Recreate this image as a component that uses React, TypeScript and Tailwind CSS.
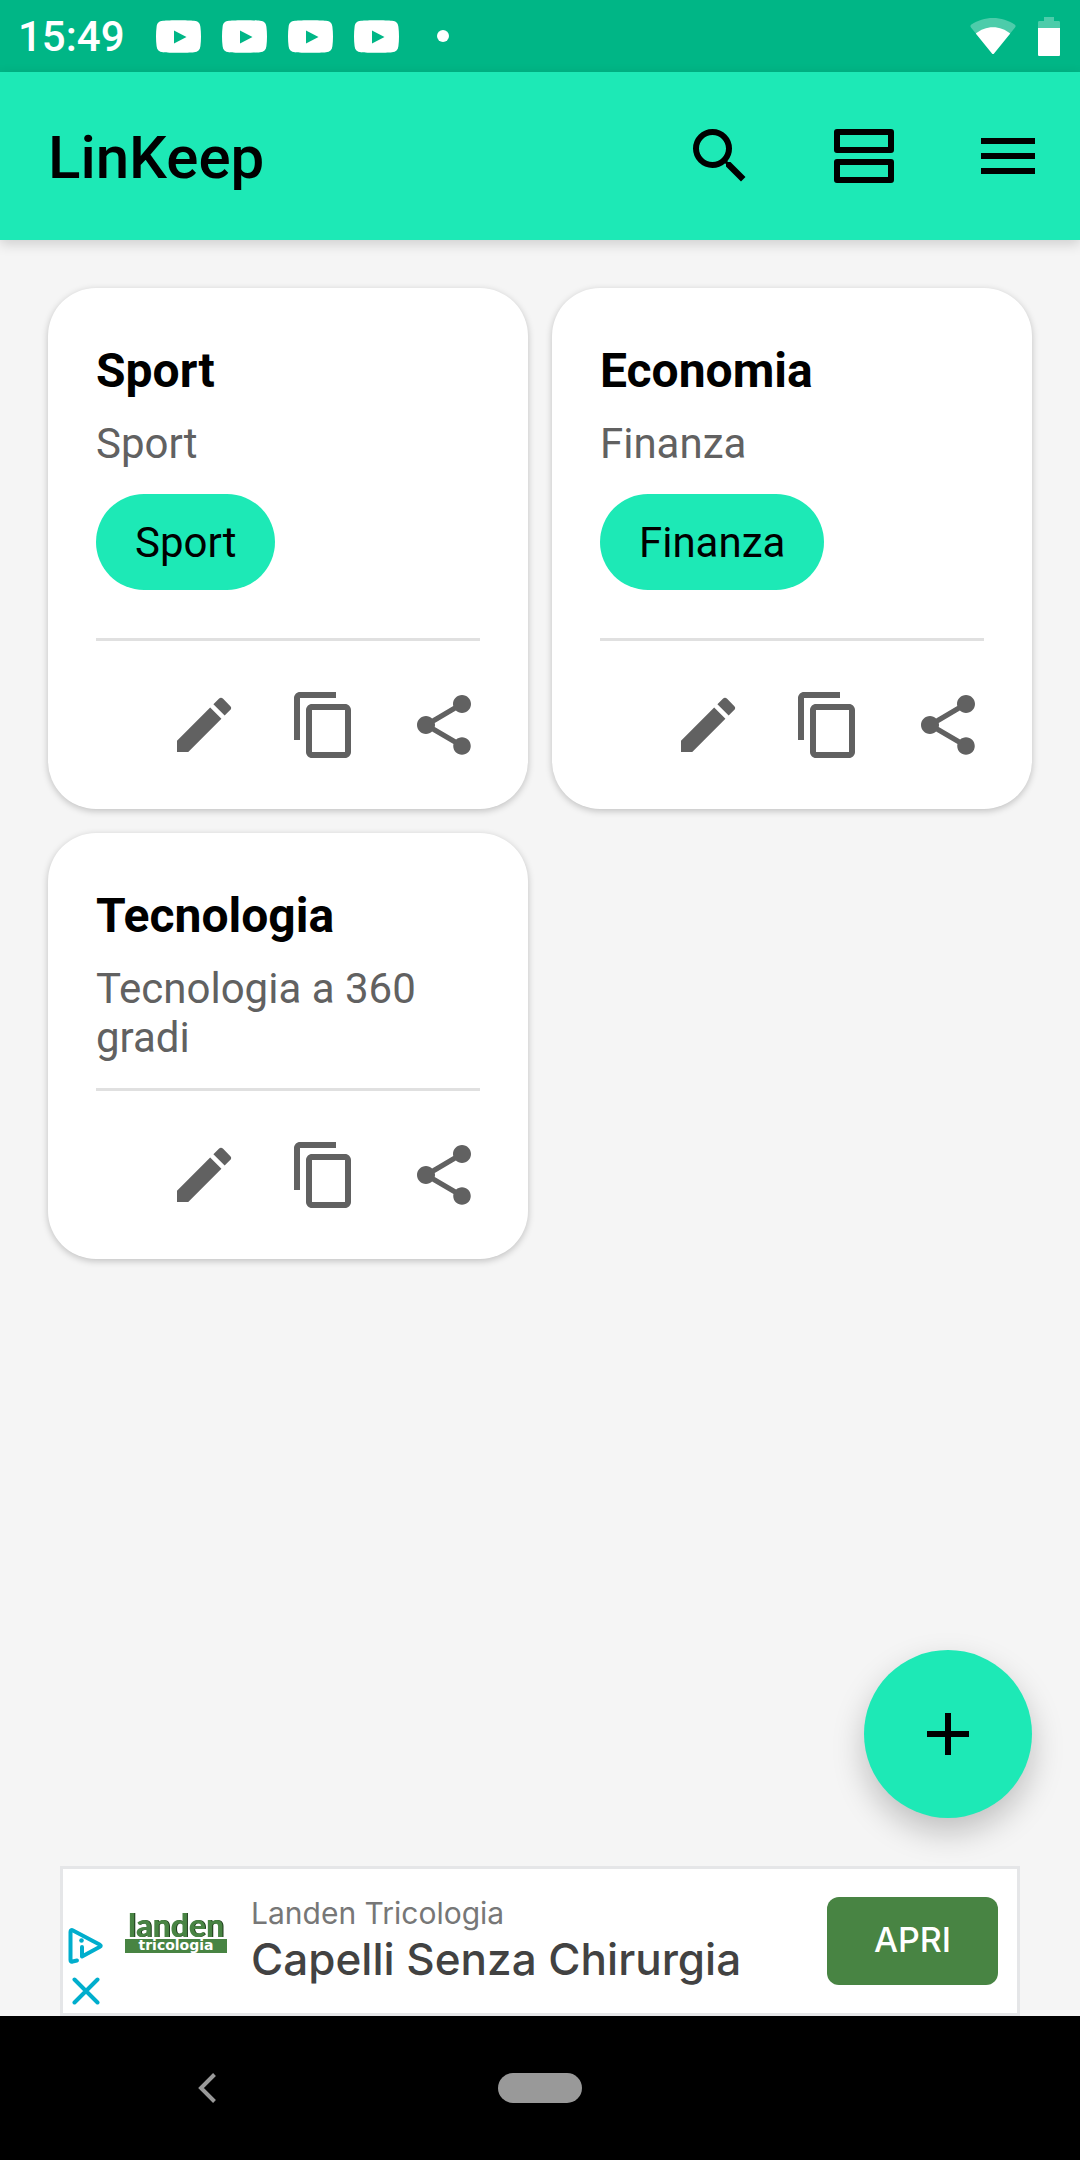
import type { ReactNode } from "react";
import { MdAdd, MdContentCopy, MdEdit, MdMenu, MdSearch, MdShare } from "react-icons/md";

type LinkGroup = {
  title: string;
  description: string;
  tag?: string;
};

const groups: LinkGroup[] = [
  { title: "Sport", description: "Sport", tag: "Sport" },
  { title: "Economia", description: "Finanza", tag: "Finanza" },
  { title: "Tecnologia", description: "Tecnologia a 360 gradi" },
];

const notifications = [1, 2, 3, 4];

function YoutubeIcon() {
  return (
    <svg width="45" height="33" viewBox="0 0 45 33" aria-hidden="true">
      <path
        fill="#fff"
        fillRule="evenodd"
        d="M7 .8C13 0 32 0 38 .8c4 .4 6 2.200 6.400 6 .8 6 .8 13.400 0 19.400-.4 3.600-2.400 5.600-6.400 6-6 .8-25 .8-31 0-4-.4-6-2.400-6.400-6-.8-6-.8-13.400 0-19.400C1 3 3 1.200 7 .8ZM18 10.500v13L30.500 17 18 10.500Z"
      />
    </svg>
  );
}

function WifiIcon() {
  return (
    <svg width="46" height="37" viewBox="0 0 46 37" aria-hidden="true">
      <path fill="#fff" fillOpacity="0.3" d="M1 9.500c-.9-1.200-.8-2.200.4-3C7.500 2.500 15 0 23 0s15.500 2.500 21.600 6.500c1.200.8 1.300 1.800.4 3L24 35.500c-.6.7-1.400.7-2 0L1 9.500Z" />
      <path fill="#fff" d="M5.800 15.500C10.500 11.500 16.500 9.200 23 9.200s12.500 2.300 17.200 6.300L24 35.500c-.6.7-1.400.7-2 0L5.800 15.500Z" />
    </svg>
  );
}

function BatteryIcon() {
  return (
    <svg width="22" height="39" viewBox="0 0 22 39" aria-hidden="true">
      <path fill="#fff" fillOpacity="0.3" d="M6 0h10v4h4.500c1 0 1.500.5 1.500 1.500V11H0V5.500C0 4.500.5 4 1.500 4H6V0Z" />
      <path fill="#fff" d="M0 11h22v26.500c0 1-.5 1.500-1.500 1.500h-19C.5 39 0 38.500 0 37.500V11Z" />
    </svg>
  );
}

function AgendaIcon() {
  return (
    <svg width="72" height="72" viewBox="0 0 24 24" fill="none" stroke="currentColor" strokeWidth="2" strokeLinejoin="round" aria-hidden="true">
      <path d="M3 4h18v6H3zM3 14h18v6H3z" />
    </svg>
  );
}

function LandenLogo() {
  return (
    <svg width="102" height="56" viewBox="0 0 102 56" role="img" aria-label="Landen Tricologia" className="shrink-0 overflow-visible">
      <text
        x="51"
        y="24"
        textAnchor="middle"
        fill="#488443"
        fontFamily="Lato, 'Liberation Sans', sans-serif"
        fontWeight="900"
        fontSize="32"
        className="drop-shadow-[1px_0_0_#1d3a1b]"
      >
        landen
      </text>
      <rect x="0" y="26" width="102" height="14" fill="#488443" />
      <text x="51" y="37" textAnchor="middle" fill="#fff" fontFamily="'DejaVu Sans', sans-serif" fontWeight="700" fontSize="14">
        tricologia
      </text>
    </svg>
  );
}

function AdChoicesIcon() {
  return (
    <svg width="36" height="38" viewBox="0 0 36 38" fill="none" stroke="#00aecd" strokeWidth="4" strokeLinecap="round" strokeLinejoin="round" aria-hidden="true">
      <path d="M9 33.500 4.500 34.500C3 35 2.500 34.500 2.500 33V5c0-1.800 1-2.300 2.500-1.500l26.500 14c1.700.9 1.700 1.700 0 2.600L14 29.500V20" />
      <circle cx="13.500" cy="13.500" r="2.300" fill="#00aecd" stroke="none" />
    </svg>
  );
}

function ToolbarButton({ label, children }: { label: string; children: ReactNode }) {
  return (
    <button aria-label={label} className="flex h-full w-36 items-center justify-center">
      {children}
    </button>
  );
}

function GroupCard({ group }: { group: LinkGroup }) {
  return (
    <article className="rounded-[48px] bg-white p-12 shadow-[0_2px_7px_rgba(0,0,0,0.22)]">
      <h2 className="mb-[13px] text-5xl leading-[70px] font-bold text-black">{group.title}</h2>
      <p className="mb-[26px] text-[42px] leading-[49px] text-[#616161]">{group.description}</p>
      {group.tag && (
        <button className="mb-12 flex h-24 items-center rounded-full bg-[#1de9b6] px-[39px] text-[42px] leading-[49px] text-black">
          {group.tag}
        </button>
      )}
      <hr className="border-t-[3px] border-[#e0e0e0]" />
      <div className="mt-12 flex justify-end gap-12 text-[#616161]">
        <button aria-label="Modifica">
          <MdEdit size={72} />
        </button>
        <button aria-label="Copia">
          <MdContentCopy size={72} />
        </button>
        <button aria-label="Condividi">
          <MdShare size={72} />
        </button>
      </div>
    </article>
  );
}

export default function App() {
  return (
    <div className="flex min-h-screen flex-col bg-[#f5f5f5] font-[Roboto,'Liberation_Sans',sans-serif]">
      <div className="flex h-[72px] items-center justify-between bg-[#00b686] pr-5 pl-[18px]">
        <div className="flex items-center">
          <span className="mr-[31px] text-[42px] leading-[49px] font-medium text-white">15:49</span>
          <div className="flex gap-[21px]">
            {notifications.map((id) => (
              <YoutubeIcon key={id} />
            ))}
          </div>
          <span className="ml-[38px] size-3 rounded-full bg-white" />
        </div>
        <div className="flex items-center gap-[22px]">
          <WifiIcon />
          <BatteryIcon />
        </div>
      </div>

      <header className="flex h-[168px] items-center justify-between bg-[#1de9b6] pl-12 text-black shadow-[0_4px_12px_rgba(0,0,0,0.16)]">
        <h1 className="pt-1 text-6xl leading-[70px] font-medium">LinKeep</h1>
        <nav className="flex h-full">
          <ToolbarButton label="Cerca">
            <MdSearch size={72} />
          </ToolbarButton>
          <ToolbarButton label="Cambia vista">
            <AgendaIcon />
          </ToolbarButton>
          <ToolbarButton label="Menu">
            <MdMenu size={72} />
          </ToolbarButton>
        </nav>
      </header>

      <main className="relative flex-1 p-12">
        <div className="grid grid-cols-2 items-start gap-6">
          {groups.map((group) => (
            <GroupCard key={group.title} group={group} />
          ))}
        </div>
        <button
          aria-label="Aggiungi"
          className="absolute right-12 bottom-12 flex size-[168px] items-center justify-center rounded-full bg-[#1de9b6] text-black shadow-[0_14px_32px_rgba(0,0,0,0.22)]"
        >
          <MdAdd size={72} />
        </button>
      </main>

      <aside className="mx-[60px] flex h-[150px] items-center border-[3px] border-[#e5e6e8] bg-white pr-[19px] pl-[5px] font-[Inter,'Liberation_Sans',sans-serif]">
        <div className="flex flex-col items-center gap-3 self-end pb-2">
          <button aria-label="Scegli annunci">
            <AdChoicesIcon />
          </button>
          <button aria-label="Chiudi annuncio">
            <svg width="28" height="28" viewBox="0 0 28 28" stroke="#00aecd" strokeWidth="4" strokeLinecap="round" aria-hidden="true">
              <path d="M2.500 2.500l23 23M25.500 2.500l-23 23" />
            </svg>
          </button>
        </div>
        <div className="ml-[21px]">
          <LandenLogo />
        </div>
        <div className="ml-6 flex-1 pb-1">
          <p className="text-[30px] leading-10 text-[#777777]">Landen Tricologia</p>
          <p className="text-[44px] leading-[52px] font-medium text-[#424242]">Capelli Senza Chirurgia</p>
        </div>
        <button className="h-[88px] w-[171px] rounded-xl bg-[#488443] pb-1 text-[34px] font-medium text-white">APRI</button>
      </aside>

      <nav className="grid h-36 grid-cols-[1fr_auto_1fr] items-center bg-black px-[171px]">
        <button aria-label="Indietro" className="flex size-[72px] items-center justify-center">
          <svg width="18" height="30" viewBox="0 0 18 30" fill="none" stroke="#999" strokeWidth="4" aria-hidden="true">
            <path d="M16.500 1.500 3 15l13.500 13.500" />
          </svg>
        </button>
        <button aria-label="Home" className="h-[30px] w-[84px] rounded-full bg-[#999999]" />
      </nav>
    </div>
  );
}
